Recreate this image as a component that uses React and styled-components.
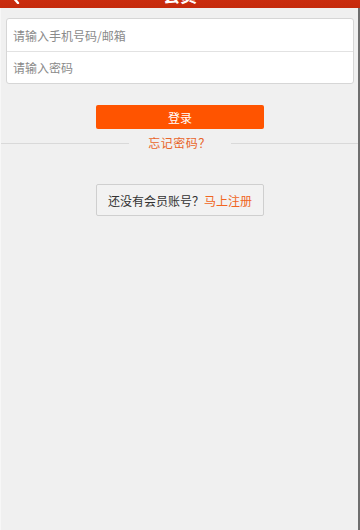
import React from "react";
import styled, { createGlobalStyle } from "styled-components";

const GlobalStyle = createGlobalStyle`
  html, body {
    margin: 0;
    padding: 0;
    background: #f0f0f0;
  }
  body {
    font-family: "Noto Sans CJK SC", "Liberation Sans", sans-serif;
    overflow: hidden;
  }
  * {
    box-sizing: border-box;
  }
`;

export default function App() {
  return (
    <Page>
      <GlobalStyle />
      <Header>
        <Back width="10" height="16" viewBox="0 0 10 16">
          <path d="M8 1 L2 8 L8 15" fill="none" stroke="#fff" strokeWidth="2.4" strokeLinecap="round" strokeLinejoin="round" />
        </Back>
        <Title>会员</Title>
      </Header>
      <Body>
        <InputGroup>
          <Field placeholder="请输入手机号码/邮箱" />
          <Field type="password" placeholder="请输入密码" />
        </InputGroup>

        <LoginButton>登录</LoginButton>

        <Divider>
          <ForgotLink>忘记密码？</ForgotLink>
        </Divider>

        <RegisterBox>
          还没有会员账号？<Accent>马上注册</Accent>
        </RegisterBox>
      </Body>
    </Page>
  );
}

const Page = styled.div`
  width: 360px;
  height: 530px;
  overflow: hidden;
  background: #f0f0f0;
`;

const Header = styled.div`
  height: 44px;
  margin-top: -36px;
  background: linear-gradient(#e0391a, #c52a0c);
  display: flex;
  justify-content: center;
  position: relative;
  color: #fff;
  overflow: hidden;
`;

const Back = styled.svg`
  position: absolute;
  left: 10px;
  top: 24px;
`;

const Title = styled.span`
  font-size: 17px;
  font-weight: 700;
  line-height: 20px;
  margin-top: 21px;
`;

const Body = styled.div`
  height: 522px;
  border-right: 2px solid #6e6e6e;
  border-left: 1px solid #f7f7f7;
  padding: 10px 4px 0 5px;
  display: flex;
  flex-direction: column;
  align-items: center;
`;

const InputGroup = styled.div`
  width: 100%;
  background: #fff;
  border: 1px solid #d6d6d6;
  border-radius: 3px;
  display: flex;
  flex-direction: column;
`;

const Field = styled.input`
  height: 32px;
  border: none;
  outline: none;
  background: transparent;
  padding: 0 6px;
  font-family: inherit;
  font-size: 12px;
  color: #333;
  &::placeholder {
    color: #8a8a8a;
  }
  & + & {
    border-top: 1px solid #e2e2e2;
  }
`;

const LoginButton = styled.button`
  margin-top: 21px;
  width: 168px;
  height: 24px;
  border: none;
  border-radius: 2px;
  background: #ff5400;
  color: #fff;
  font-family: inherit;
  font-size: 12px;
  padding: 0;
`;

const Divider = styled.div`
  width: calc(100% + 9px);
  margin: 4px -4px 0 -5px;
  display: flex;
  align-items: center;
  gap: 18px;
  &::before,
  &::after {
    content: "";
    flex: 1;
    height: 1px;
    background: #d9d9d9;
  }
`;

const ForgotLink = styled.span`
  font-size: 12px;
  color: #e8652a;
  line-height: 20px;
  width: 66px;
  text-align: center;
  letter-spacing: 0.5px;
`;

const RegisterBox = styled.div`
  margin-top: 31px;
  width: 168px;
  height: 32px;
  border: 1px solid #cfcfcf;
  border-radius: 2px;
  background: #f2f2f2;
  display: flex;
  align-items: center;
  justify-content: center;
  font-size: 12px;
  color: #333;
`;

const Accent = styled.span`
  color: #f06522;
`;
